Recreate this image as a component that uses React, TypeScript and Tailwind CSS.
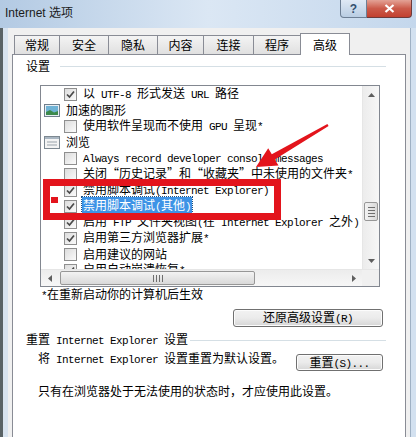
import React from "react";

// splits a string into half-width (ascii) and full-width runs, like SimSun draws it
function T({ text }: { text: string }) {
    const parts: React.ReactNode[] = [];
    let buf = "";
    let ascii = false;
    const flush = (key: number) => {
        if (!buf) return;
        parts.push(
            ascii ? (
                <span key={key} className="font-['Liberation_Mono'] text-[11px] tracking-[-0.6px]">
                    {buf}
                </span>
            ) : (
                <span key={key}>{buf}</span>
            )
        );
        buf = "";
    };
    let k = 0;
    for (const ch of text) {
        if (ch === "\u201C" || ch === "\u201D") {
            flush(k++);
            parts.push(
                <span key={k++} className={`inline-block w-[12px] ${ch === "\u201C" ? "text-right" : "text-left"}`}>
                    {ch}
                </span>
            );
            continue;
        }
        const a = ch.charCodeAt(0) < 128;
        if (a !== ascii) {
            flush(k++);
            ascii = a;
        }
        buf += ch;
    }
    flush(k++);
    return <>{parts}</>;
}

function CheckBox({ checked }: { checked: boolean }) {
    return (
        <span className="w-[13px] h-[13px] border border-[#8f8f8f] bg-gradient-to-br from-[#dcdcdc] to-[#fbfbfb] flex items-center justify-center shrink-0">
            {checked && (
                <svg width="11" height="11" viewBox="0 0 11 11">
                    <path d="M2 5.5 L4.5 8 L9 2.5" fill="none" stroke="#4a4a4a" strokeWidth="1.7" />
                </svg>
            )}
        </span>
    );
}

function PictureIcon() {
    return (
        <svg width="16" height="13" viewBox="0 0 16 13">
            <rect x="0.5" y="0.5" width="15" height="12" fill="#e8eef4" stroke="#6f7f8c" />
            <rect x="2" y="2" width="12" height="9" fill="#6fb3d6" />
            <path d="M2 11 L2 8 L6 6 L10 8.5 L14 7 L14 11 Z" fill="#3c8a4c" />
        </svg>
    );
}

function WindowIcon() {
    return (
        <svg width="16" height="13" viewBox="0 0 16 13">
            <rect x="0.5" y="0.5" width="15" height="12" fill="#f4f4f4" stroke="#7d8891" />
            <rect x="1" y="1" width="14" height="2" fill="#a9b6c2" />
            <line x1="3" y1="6" x2="13" y2="6" stroke="#9aa3ab" />
            <line x1="3" y1="9" x2="13" y2="9" stroke="#9aa3ab" />
        </svg>
    );
}

type Row =
    | { kind: "group"; icon: "pic" | "win"; text: string }
    | { kind: "check"; checked: boolean; text: string; selected?: boolean };

const rows: Row[] = [
    { kind: "check", checked: true, text: "以 UTF-8 形式发送 URL 路径" },
    { kind: "group", icon: "pic", text: "加速的图形" },
    { kind: "check", checked: false, text: "使用软件呈现而不使用 GPU 呈现*" },
    { kind: "group", icon: "win", text: "浏览" },
    { kind: "check", checked: false, text: "Always record developer console messages" },
    { kind: "check", checked: false, text: "关闭\u201C历史记录\u201D和\u201C收藏夹\u201D中未使用的文件夹*" },
    { kind: "check", checked: true, text: "禁用脚本调试(Internet Explorer)" },
    { kind: "check", checked: true, text: "禁用脚本调试(其他)", selected: true },
    { kind: "check", checked: true, text: "启用 FTP 文件夹视图(在 Internet Explorer 之外)" },
    { kind: "check", checked: true, text: "启用第三方浏览器扩展*" },
    { kind: "check", checked: false, text: "启用建议的网站" },
    { kind: "check", checked: true, text: "启用自动崩溃恢复*" },
];

const tabs = [
    { label: "常规", w: 45 },
    { label: "安全", w: 49 },
    { label: "隐私", w: 49 },
    { label: "内容", w: 46 },
    { label: "连接", w: 50 },
    { label: "程序", w: 47 },
    { label: "高级", w: 50, active: true },
];

function Arrow({ dir }: { dir: "up" | "down" | "left" | "right" }) {
    const d = {
        up: "M0 4 L3.5 0 L7 4 Z",
        down: "M0 0 L3.5 4 L7 0 Z",
        left: "M4 0 L0 3.5 L4 7 Z",
        right: "M0 0 L4 3.5 L0 7 Z",
    }[dir];
    const vertical = dir === "up" || dir === "down";
    return (
        <svg width={vertical ? 7 : 4} height={vertical ? 4 : 7} viewBox={vertical ? "0 0 7 4" : "0 0 4 7"}>
            <path d={d} fill="#5e5e5e" />
        </svg>
    );
}

function ListBox() {
    return (
        <div className="ml-[27px] mt-[11px] w-[340px] h-[202px] border border-[#828790] bg-white flex flex-col">
            <div className="flex flex-1 min-h-0">
                <div className="flex-1 overflow-hidden">
                    {rows.map((r, i) =>
                        r.kind === "group" ? (
                            <div key={i} className="h-[16px] flex items-center pl-[3px] gap-[6px] leading-[16px]">
                                {r.icon === "pic" ? <PictureIcon /> : <WindowIcon />}
                                <span className="whitespace-nowrap">
                                    <T text={r.text} />
                                </span>
                            </div>
                        ) : (
                            <div key={i} className="h-[16px] flex items-center pl-[23px] gap-[5px] leading-[16px]">
                                <CheckBox checked={r.checked} />
                                <span
                                    className={`whitespace-nowrap px-[1px] ${
                                        r.selected ? "bg-[#3d93e6] text-white outline outline-1 outline-dotted outline-[#1d4f80]" : ""
                                    }`}
                                >
                                    <T text={r.text} />
                                </span>
                            </div>
                        )
                    )}
                </div>
                <div className="w-[17px] bg-gradient-to-r from-[#ececec] to-[#f7f7f7] border-l border-[#e6e6e6] flex flex-col items-center">
                    <div className="h-[17px] flex items-center justify-center">
                        <Arrow dir="up" />
                    </div>
                    <div className="flex-1 relative w-full">
                        <div className="absolute left-[1px] right-[1px] top-[99px] h-[19px] rounded-[2px] border border-[#979797] bg-gradient-to-r from-[#f3f3f3] to-[#d9d9d9] flex flex-col items-center justify-center gap-[2px]">
                            <span className="w-[7px] h-px bg-[#6e6e6e]" />
                            <span className="w-[7px] h-px bg-[#6e6e6e]" />
                            <span className="w-[7px] h-px bg-[#6e6e6e]" />
                            <span className="w-[7px] h-px bg-[#6e6e6e]" />
                        </div>
                    </div>
                    <div className="h-[17px] flex items-center justify-center">
                        <Arrow dir="down" />
                    </div>
                </div>
            </div>
            <div className="h-[17px] flex border-t border-[#e6e6e6] bg-gradient-to-b from-[#ececec] to-[#f7f7f7]">
                <div className="w-[17px] flex items-center justify-center">
                    <Arrow dir="left" />
                </div>
                <div className="flex-1 relative">
                    <div className="absolute top-[1px] bottom-[1px] left-[2px] w-[195px] rounded-[2px] border border-[#979797] bg-gradient-to-b from-[#f3f3f3] to-[#d9d9d9] flex items-center justify-center gap-[2px]">
                        <span className="w-px h-[7px] bg-[#6e6e6e]" />
                        <span className="w-px h-[7px] bg-[#6e6e6e]" />
                        <span className="w-px h-[7px] bg-[#6e6e6e]" />
                        <span className="w-px h-[7px] bg-[#6e6e6e]" />
                    </div>
                </div>
                <div className="w-[17px] flex items-center justify-center">
                    <Arrow dir="right" />
                </div>
                <div className="w-[17px] bg-[#f0f0f0]" />
            </div>
        </div>
    );
}

function Button({ label, className }: { label: string; className: string }) {
    return (
        <div
            className={`rounded-[3px] border border-[#707070] bg-gradient-to-b from-[#f2f2f2] via-[#ebebeb] to-[#d6d6d6] flex items-center justify-center leading-none shadow-[inset_0_0_0_1px_#fcfcfc] ${className}`}
        >
            <span className="whitespace-nowrap">
                <T text={label} />
            </span>
        </div>
    );
}

export default function App() {
    return (
        <div className="relative w-[416px] h-[437px] overflow-hidden flex flex-col bg-gradient-to-r from-[#b3cae3] via-[#dbe7f4] to-[#c4d7ec] text-[12px] text-black font-['Noto_Sans_CJK_SC',sans-serif]">
            {/* title bar */}
            <div className="h-[28px] flex items-start shrink-0">
                <div className="pl-[5px] pt-[5px] text-[12px] leading-[16px] text-[#1b1b1b] font-['Liberation_Sans','Noto_Sans_CJK_SC',sans-serif]">
                    Internet 选项
                </div>
                <div className="ml-auto mr-[4px] flex">
                    <div className="w-[27px] h-[18px] rounded-bl-[4px] border border-t-0 border-[#6d7f95] bg-gradient-to-b from-[#dfe9f5] to-[#b9cde3] flex items-center justify-center text-[12px] leading-none text-[#33506f] font-['Liberation_Sans',sans-serif] font-bold">
                        ?
                    </div>
                    <div className="w-[45px] h-[18px] rounded-br-[4px] border border-t-0 border-l-0 border-[#6d3a3a] bg-gradient-to-b from-[#e3a296] via-[#cb5a4a] to-[#c2402f] flex items-center justify-center">
                        <svg width="11" height="9" viewBox="0 0 11 9">
                            <path d="M1.5 1 L9.5 8 M9.5 1 L1.5 8" stroke="white" strokeWidth="2.2" />
                        </svg>
                    </div>
                </div>
            </div>

            {/* window body */}
            <div className="flex-1 flex min-h-0">
                <div className="w-[3px] bg-[#5a6366]" />
                <div className="w-[5px] bg-[#d8e3ef]" />
                <div className="flex-1 bg-[#f0f0f0] px-[4px] pt-[5px] flex flex-col min-h-0">
                    <div className="flex items-end pl-[2px] shrink-0">
                        {tabs.map((t) => (
                            <div
                                key={t.label}
                                style={{ width: t.w }}
                                className={
                                    t.active
                                        ? "h-[22px] -mb-px relative z-10 bg-white border border-b-0 border-[#898c95] flex items-center justify-center leading-none"
                                        : "h-[19px] bg-gradient-to-b from-[#f4f4f4] to-[#e0e0e0] border border-b-0 border-r-0 border-[#898c95] flex items-center justify-center leading-none"
                                }
                            >
                                {t.label}
                            </div>
                        ))}
                    </div>
                    <div className="flex-1 bg-white border border-b-0 border-[#898c95] flex flex-col">
                        <div className="mt-[3px] pl-[13px] pr-[19px] flex items-center h-[16px]">
                            <span className="leading-[16px]">设置</span>
                            <span className="flex-1 ml-[10px] border-t border-[#d5dfe5]" />
                        </div>
                        <ListBox />
                        <div className="ml-[28px] leading-[14px]">
                            <T text="*在重新启动你的计算机后生效" />
                        </div>
                        <Button label="还原高级设置(R)" className="self-end mr-[22px] mt-[6px] w-[150px] h-[18px]" />
                        <div className="mt-[5px] pl-[13px] pr-[19px] flex items-center h-[16px]">
                            <span className="leading-[16px] whitespace-nowrap">
                                <T text="重置 Internet Explorer 设置" />
                            </span>
                            <span className="flex-1 ml-[2px] border-t border-[#d5dfe5]" />
                        </div>
                        <div className="mt-[2px] pl-[25px] pr-[22px] flex items-start">
                            <span className="leading-[16px] whitespace-nowrap">
                                <T text="将 Internet Explorer 设置重置为默认设置。" />
                            </span>
                            <Button label="重置(S)..." className="ml-auto mt-[4px] w-[87px] h-[17px]" />
                        </div>
                        <div className="mt-[12px] pl-[25px] leading-[16px]">
                            只有在浏览器处于无法使用的状态时，才应使用此设置。
                        </div>
                    </div>
                </div>
                <div className="w-[6px] bg-[#d3e1f0] border-l border-[#9fb1c4]" />
            </div>

            {/* annotation: red frame, marker and arrow */}
            <div className="absolute left-[43px] top-[179px] w-[238px] h-[41px] border-[7px] border-[#e3141c] pointer-events-none" />
            <div className="absolute left-[51px] top-[197px] w-[7px] h-[6px] bg-[#e3141c]" />
            <svg className="absolute left-0 top-0" width="416" height="437" viewBox="0 0 416 437">
                <polygon
                    points="328.6,126 274.8,159.5 278.5,165.5 256,167 268.2,148.3 271.8,154.3 327.4,124"
                    fill="#e3141c"
                />
            </svg>
        </div>
    );
}
